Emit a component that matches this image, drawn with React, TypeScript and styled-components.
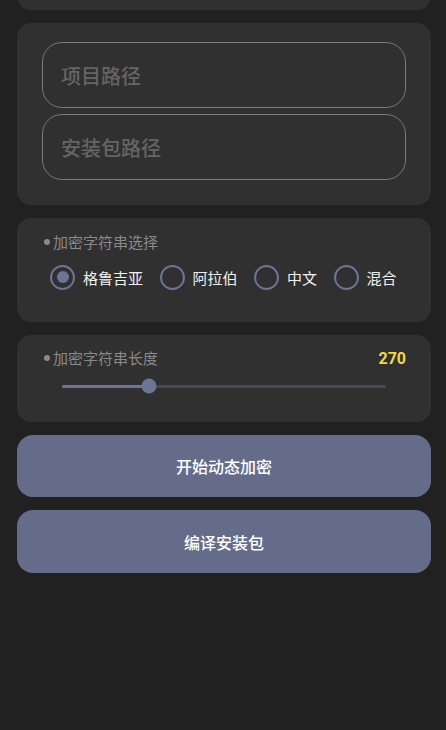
import React, { useState } from "react";
import styled, { createGlobalStyle } from "styled-components";

const GlobalStyle = createGlobalStyle`
  html, body { margin: 0; padding: 0; background: #212121; }
  body {
    font-family: "Noto Sans CJK SC", "Noto Sans", Roboto, sans-serif;
    -webkit-font-smoothing: antialiased;
  }
  * { box-sizing: border-box; }
`;

const Page = styled.div`
  width: 446px;
  height: 730px;
  overflow: hidden;
  background: #212121;
  padding: 0 15px 0 17px;
  display: flex;
  flex-direction: column;
  gap: 13px;
`;

const Card = styled.section`
  background: #303030;
  border-radius: 14px;
  display: flex;
  flex-direction: column;
`;

const StubCard = styled(Card)`
  height: 52px;
  margin-top: -42px;
  flex-shrink: 0;
`;

const PathCard = styled(Card)`
  padding: 19px 25px 25px;
  gap: 6px;
`;

const PathInput = styled.input`
  height: 66px;
  width: 100%;
  border: 1px solid #7a7a7a;
  border-radius: 20px;
  background: transparent;
  padding: 0 18px;
  font-family: "Noto Sans CJK SC", sans-serif;
  font-size: 20px;
  font-weight: 500;
  color: #ddd;
  outline: none;
  &::placeholder { color: #656565; }
`;

const OptionCard = styled(Card)<{ $pt: number; $pb: number }>`
  padding: ${(p) => p.$pt}px 25px ${(p) => p.$pb}px;
`;

const TitleRow = styled.div`
  display: flex;
  align-items: center;
  justify-content: space-between;
  height: 20px;
`;

const Title = styled.div`
  display: flex;
  align-items: center;
  font-size: 15px;
  line-height: 20px;
  color: #8a8a8a;
  padding-left: 2px;
  &::before {
    content: "";
    width: 6px;
    height: 6px;
    border-radius: 50%;
    background: #8a8a8a;
    margin-right: 3px;
  }
`;

const Value = styled.div`
  font-family: Roboto, "Liberation Sans", sans-serif;
  font-weight: 700;
  font-size: 16px;
  color: #f1dc3d;
`;

const RadioRow = styled.div`
  display: flex;
  align-items: center;
  gap: 16.5px;
  height: 26px;
  margin-top: 12px;
  padding-left: 8px;
`;

const RadioItem = styled.label`
  display: flex;
  align-items: center;
  gap: 8px;
  cursor: pointer;
  font-size: 15px;
  font-weight: 400;
  color: #f0f0f0;
`;

const RadioCircle = styled.span<{ $on: boolean }>`
  width: 25px;
  height: 25px;
  border-radius: 50%;
  border: 2.5px solid #6c7497;
  display: flex;
  align-items: center;
  justify-content: center;
  &::after {
    content: "";
    width: 12px;
    height: 12px;
    border-radius: 50%;
    background: #6c7497;
    display: ${(p) => (p.$on ? "block" : "none")};
  }
`;

const SliderRow = styled.div`
  position: relative;
  height: 20px;
  margin: 8px 20px 0;
  display: flex;
  align-items: center;
`;

const Track = styled.div`
  position: relative;
  width: 100%;
  height: 3px;
  border-radius: 2px;
  background: #454a59;
`;

const TrackFill = styled.div`
  position: absolute;
  left: 0;
  top: 0;
  height: 100%;
  border-radius: 2px;
  background: #6c7497;
`;

const Thumb = styled.div`
  position: absolute;
  top: 50%;
  width: 15px;
  height: 15px;
  border-radius: 50%;
  background: #6c7497;
  transform: translate(-50%, -50%);
`;

const ActionButton = styled.button<{ $h: number }>`
  height: ${(p) => p.$h}px;
  flex-shrink: 0;
  border: none;
  border-radius: 16px;
  background: #646c8a;
  color: #ffffff;
  font-family: "Noto Sans CJK SC", sans-serif;
  font-size: 16px;
  font-weight: 500;
  cursor: pointer;
`;

const options = ["格鲁吉亚", "阿拉伯", "中文", "混合"];

export default function App() {
  const [choice, setChoice] = useState(0);
  const value = 270;
  const pct = (value / 1000) * 100;
  return (
    <>
      <GlobalStyle />
      <Page>
        <StubCard />
        <PathCard>
          <PathInput placeholder="项目路径" />
          <PathInput placeholder="安装包路径" />
        </PathCard>
        <OptionCard $pt={14} $pb={32}>
          <Title>加密字符串选择</Title>
          <RadioRow>
            {options.map((o, i) => (
              <RadioItem key={o} onClick={() => setChoice(i)}>
                <RadioCircle $on={choice === i} />
                {o}
              </RadioItem>
            ))}
          </RadioRow>
        </OptionCard>
        <OptionCard $pt={13} $pb={26}>
          <TitleRow>
            <Title>加密字符串长度</Title>
            <Value>{value}</Value>
          </TitleRow>
          <SliderRow>
            <Track>
              <TrackFill style={{ width: `${pct}%` }} />
              <Thumb style={{ left: `${pct}%` }} />
            </Track>
          </SliderRow>
        </OptionCard>
        <ActionButton $h={62}>开始动态加密</ActionButton>
        <ActionButton $h={63}>编译安装包</ActionButton>
      </Page>
    </>
  );
}
